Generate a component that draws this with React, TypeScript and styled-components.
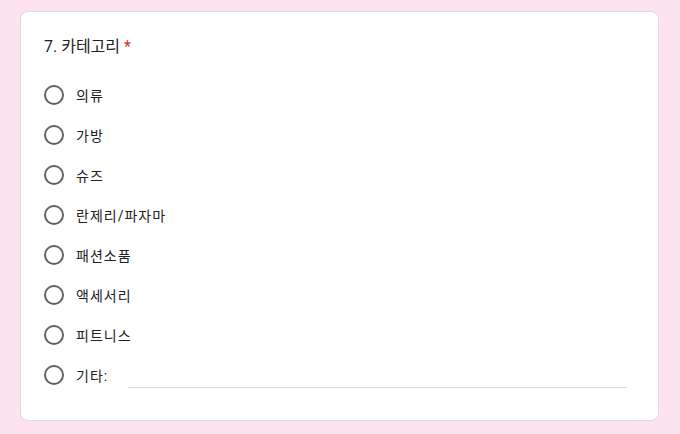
import React from "react";
import styled, { createGlobalStyle } from "styled-components";

const Global = createGlobalStyle`
  html, body { margin: 0; padding: 0; background: #fde3ef; }
  body { font-family: Roboto, "Noto Sans CJK KR", sans-serif; }
`;

const Page = styled.div`
  padding: 11px 21px 12px 20px;
`;

const Card = styled.div`
  background: #fff;
  border: 1px solid #dadce0;
  border-radius: 8px;
  padding: 23px 24px 25px 23px;
  display: flex;
  flex-direction: column;
`;

const Title = styled.div`
  font-size: 16px;
  line-height: 24px;
  color: #202124;
  margin-bottom: 16px;
`;

const Star = styled.span`
  color: #d93025;
  margin-left: 4px;
`;

const Option = styled.label`
  display: flex;
  align-items: center;
  height: 40px;
  font-size: 14px;
  letter-spacing: 1px;
  color: #202124;
`;

const Radio = styled.span`
  box-sizing: border-box;
  width: 20px;
  height: 20px;
  border: 2px solid #5f6368;
  border-radius: 50%;
  margin-right: 12px;
  flex: none;
`;

const OtherInput = styled.div`
  flex: 1;
  margin-left: 20px;
  margin-right: 7px;
  height: 22px;
  border-bottom: 1px solid #dadce0;
  align-self: flex-start;
  margin-top: 10px;
`;

const items = ["의류", "가방", "슈즈", "란제리/파자마", "패션소품", "액세서리", "피트니스"];

export default function App() {
  return (
    <>
      <Global />
      <Page>
        <Card>
          <Title>
            7. 카테고리<Star>*</Star>
          </Title>
          {items.map((t) => (
            <Option key={t}>
              <Radio />
              {t}
            </Option>
          ))}
          <Option>
            <Radio />
            기타:
            <OtherInput />
          </Option>
        </Card>
      </Page>
    </>
  );
}
